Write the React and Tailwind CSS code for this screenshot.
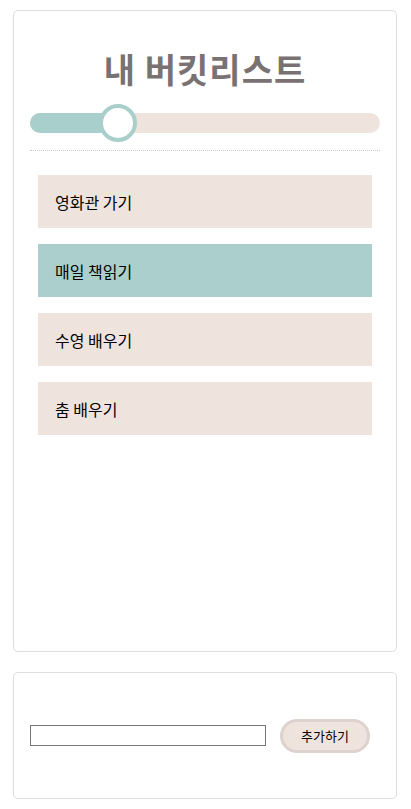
const items = [
  { text: "영화관 가기", done: false },
  { text: "매일 책읽기", done: true },
  { text: "수영 배우기", done: false },
  { text: "춤 배우기", done: false },
];

const font = { fontFamily: '"Noto Sans CJK KR", "Noto Sans", sans-serif' };

export default function App() {
  return (
    <div className="min-h-[809px] bg-white pt-[10px]" style={font}>
      <div className="ml-[13px] flex h-[642px] w-[384px] flex-col rounded-[5px] border border-[#dddddd] px-4">
        <h1 className="mt-[34px] text-center text-[34px] leading-[48px] font-bold tracking-[1px] text-[#7a7272]">
          내 버킷리스트
        </h1>
        <div className="relative mt-[20px] h-[20px] rounded-full bg-[#efe3de]">
          <div className="h-full w-[88px] rounded-full bg-[#a9cfcd]" />
          <div className="absolute top-[-9px] left-[69px] h-[38px] w-[38px] rounded-full border-[4px] border-[#a9cfcd] bg-white" />
        </div>
        <div className="mt-[17px] border-b border-dotted border-[#cccccc]" />
        <div className="mt-[24px] flex flex-col gap-4 px-2">
          {items.map((item) => (
            <div
              key={item.text}
              className={`flex h-[53px] items-center px-[17px] text-[16px] text-black ${
                item.done ? "bg-[#abcfcd]" : "bg-[#efe3de]"
              }`}>
              {item.text}
            </div>
          ))}
        </div>
      </div>
      <div className="mt-[20px] ml-[13px] flex h-[127px] w-[384px] items-center rounded-[5px] border border-[#dddddd] px-4">
        <input
          type="text"
          className="h-[21px] w-[236px] border border-[#767676] bg-white outline-none"
        />
        <button
          type="button"
          className="ml-[14px] h-[34px] w-[90px] rounded-full border-[3px] border-[#ddd2cd] bg-[#efe3de] text-[13px] text-black">
          추가하기
        </button>
      </div>
    </div>
  );
}
